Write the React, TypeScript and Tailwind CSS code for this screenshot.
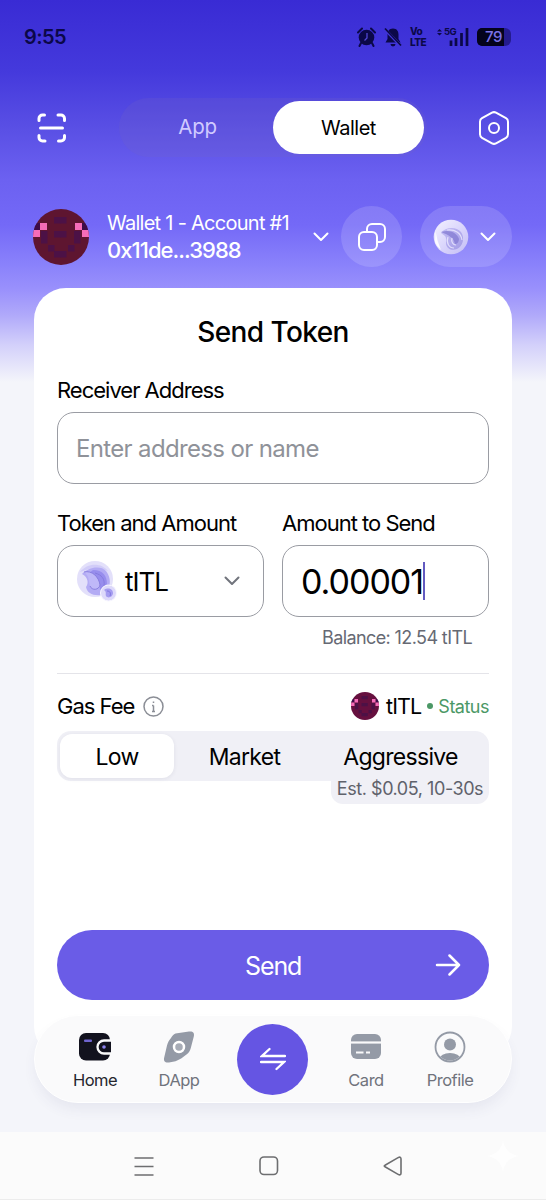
import { useState } from 'react';
import type { ReactNode } from 'react';

const AVATAR_DARK: [number, number][] = [
  [21, 8], [27, 8], [21, 22], [27, 22], [21, 42], [27, 42], [8, 22], [8, 28], [41, 22], [41, 28],
  [15, 36], [35, 36],
];

const Avatar = ({ size }: { size: number }) => (
  <svg width={size} height={size} viewBox="0 0 56 56" className="shrink-0">
    <defs>
      <clipPath id={`avatar-${size}`}>
        <circle cx="28" cy="28" r="28" />
      </clipPath>
    </defs>
    <g clipPath={`url(#avatar-${size})`}>
      <rect width="56" height="56" fill={size > 30 ? '#5e1530' : '#66103f'} />
      {AVATAR_DARK.map(([x, y]) => (
        <rect key={`${x}-${y}`} x={x} y={y} width="6.5" height="6.5" fill="#4c1146" />
      ))}
      <rect x="0" y="14" width="7" height="7" fill="#3d0c48" />
      <rect x="49" y="14" width="7" height="7" fill="#3d0c48" />
      <rect x="7" y="14" width="7" height="7" fill="#f56cb8" />
      <rect x="42" y="14" width="7" height="7" fill="#f56cb8" />
      <rect x="0" y="21" width="7" height="7" fill="#f56cb8" />
      <rect x="49" y="21" width="7" height="7" fill="#f56cb8" />
    </g>
  </svg>
);

const Coin = () => (
  <svg width="36" height="38" viewBox="0 0 36 38" className="shrink-0">
    <defs>
      <linearGradient id="coin" x1="0" y1="0" x2="1" y2="1">
        <stop offset="0" stopColor="#f4f2ff" />
        <stop offset="0.6" stopColor="#d6d1fb" />
        <stop offset="1" stopColor="#c3bdf4" />
      </linearGradient>
      <linearGradient id="swirl" x1="0" y1="0" x2="1" y2="1">
        <stop offset="0" stopColor="#b0a8f0" />
        <stop offset="1" stopColor="#8f87dc" />
      </linearGradient>
    </defs>
    <circle cx="18" cy="19" r="17.3" fill="url(#coin)" />
    <path d="M2.5 13 2 24a16 16 0 0 0 6 8q-4-9-5.5-19z" fill="#fff" opacity=".85" />
    <path d="M8 15c4-6 15-7 20-1 4 6 2 14-4 17-5 2-10 0-11-5 0-3 1-5-1-8z" fill="url(#swirl)" opacity=".65" />
    <path d="M8 14c9-3 16 1 18 7 0 3-2 5-4 5-1-6-6-9-14-12z" fill="#8078d0" opacity=".7" />
    <path
      d="M15 19c-2 6 1 11 6 11M19 20c-1 4 1 7 4 7M14 12c8-1 14 3 15 10"
      fill="none"
      stroke="#eeebff"
      strokeWidth="1.2"
      opacity=".8"
    />
  </svg>
);

const TokenIcon = () => (
  <svg width="40" height="42" viewBox="0 0 40 42" className="shrink-0">
    <circle cx="18" cy="19" r="18" fill="#e3e0fa" />
    <path d="M3 12c7-9 21-10 28-1l-9-3-10 1z" fill="#d1ccf8" />
    <path d="M5 14c6-7 19-9 24-3 7 9 4 20-5 24-8 1-14-2-15-8 3-4 2-10-4-13z" fill="#b3abf4" />
    <path d="M16 10c10 0 14 6 14 14l-7 6c0-9-4-14-11-17z" fill="#978ded" />
    <path d="M7 12c8-2 15 5 16 13-1 5-8 6-10 1-2-6 0-9-6-14z" fill="#bfb8f8" />
    <path
      d="M7 12c8-2 15 5 16 13-1 5-8 6-10 1M18 13c7 2 10 6 9 13"
      fill="none"
      stroke="#8379db"
      strokeWidth=".9"
    />
    <circle cx="31.5" cy="33" r="8" fill="#ddd9fa" stroke="#f8f7ff" strokeWidth="1" />
    <path d="M27 30c4-3 9-1 9 3s-5 6-7 3c-1-2 1-4-2-6z" fill="#a59cf0" />
    <path d="M30 31c3 0 4 2 3 5" fill="none" stroke="#7b70dc" strokeWidth=".9" />
  </svg>
);

const Chevron = ({ className }: { className: string }) => (
  <svg width="16" height="10" viewBox="0 0 16 10" fill="none" className={className}>
    <path d="m1.5 1.5 6.5 6.5 6.5-6.5" stroke="currentColor" strokeWidth="2" strokeLinecap="round" strokeLinejoin="round" />
  </svg>
);

const StatusBar = () => (
  <div className="flex h-[74px] items-center pl-6 pr-[35px] text-[#0b0848]">
    <span className="grow text-[20px] font-semibold tracking-[-0.6px]">9:55</span>
    <svg width="19" height="20" viewBox="0 0 19 20">
      <circle cx="9.5" cy="10.5" r="7.8" fill="currentColor" />
      <path d="M1 5.5 5 1.5M18 5.5l-4-4M4 16l-1.5 3M15 16l1.5 3" stroke="currentColor" strokeWidth="2" strokeLinecap="round" />
      <path d="M10 6v5l-2.5 2.5" fill="none" stroke="#5147d4" strokeWidth="1.3" />
    </svg>
    <svg width="18" height="20" viewBox="0 0 18 20" className="ml-2">
      <path d="M9 1.5c-4 0-5.5 3-5.5 6V12L1.5 15.5h15L14.5 12V7.5c0-3-1.5-6-5.5-6zM6.5 17h5a2.5 2.5 0 0 1-5 0z" fill="currentColor" />
      <path d="M1 2.5 16 18" stroke="#4236d8" strokeWidth="3" />
      <path d="m1 1.5 16 17" stroke="currentColor" strokeWidth="1.7" />
    </svg>
    <span className="ml-2 flex w-[17px] flex-col text-[10px] leading-[11px] font-extrabold tracking-[-0.5px]">
      <span>Vo</span>
      <span>LTE</span>
    </span>
    <div className="relative ml-[10px] h-[20px] w-[32px]">
      <svg width="32" height="20" viewBox="0 0 32 20">
        <path d="M0 4.5 2.5 2 5 4.5zM0 6l2.5 2.5L5 6z" fill="currentColor" />
        <path d="M14 13.5V19M19 11v8M24.5 6v13M30 1v18" stroke="currentColor" strokeWidth="2.7" />
      </svg>
      <span className="absolute left-[7px] top-0 text-[9.5px] leading-[9px] font-bold tracking-[-0.5px]">5G</span>
    </div>
    <div className="ml-2 flex h-[18px] w-[34px] items-center rounded-[6px] bg-[#241b8e]">
      <span className="flex h-full w-[27px] items-center justify-center rounded-l-[5px] bg-[#04031c] pl-1.5 text-[15px] font-medium tracking-[-0.5px] text-[#7a72e6]">
        79
      </span>
    </div>
  </div>
);

const Header = () => {
  const [tab, setTab] = useState('Wallet');
  return (
    <div className="mt-6 flex h-[59px] items-center justify-between pl-[37px] pr-9 text-white">
      <svg width="30" height="30" viewBox="0 0 30 30" fill="none" stroke="currentColor" strokeWidth="3" strokeLinecap="round">
        <path d="M2 7.5V5.5a3.500 3.500 0 0 1 3.500-3.500h2M21 2h2.500A3.500 3.500 0 0 1 27.500 5.500v2M27.500 22.500v2A3.500 3.500 0 0 1 24 28h-2.500M8 28H5.500A3.500 3.500 0 0 1 2 24.500v-2M3.500 15h22" />
      </svg>
      <div className="ml-[13px] flex h-[59px] w-[308px] items-center rounded-full bg-[#7462c4]/20 pl-px pr-[3px]">
        {['App', 'Wallet'].map((name) => (
          <button
            key={name}
            onClick={() => setTab(name)}
            className={
              tab === name
                ? 'h-[53px] w-[151px] rounded-full bg-white text-[20px] tracking-[-0.5px] text-black'
                : 'h-[53px] w-[153px] pl-0.5 text-[20.5px] tracking-[-0.3px] text-[#d0caff]'
            }
          >
            {name}
          </button>
        ))}
      </div>
      <svg width="32" height="34" viewBox="0 0 32 34" fill="none" stroke="currentColor" strokeWidth="2" className="ml-3">
        <path d="M14 1.700a4 4 0 0 1 4 0l10 5.500a4 4 0 0 1 2 3.500v12.600a4 4 0 0 1-2 3.500l-10 5.500a4 4 0 0 1-4 0L4 26.800a4 4 0 0 1-2-3.500V10.700a4 4 0 0 1 2-3.500z" />
        <circle cx="16" cy="17" r="5" />
      </svg>
    </div>
  );
};

const AccountRow = () => (
  <div className="mt-[49px] flex h-[61px] items-center pl-[33px] pr-[34px] text-white">
    <Avatar size={56} />
    <div className="ml-[18px] flex w-[206px] flex-col text-[20px] leading-[27px] whitespace-nowrap">
      <span className="tracking-[-0.73px]">Wallet 1 - Account #1</span>
      <span className="text-[22px] font-medium tracking-[-0.95px]">0x11de...3988</span>
    </div>
    <Chevron className="shrink-0" />
    <button className="ml-3 flex size-[61px] shrink-0 items-center justify-center rounded-full bg-white/14">
      <svg width="28" height="28" viewBox="0 0 28 28" fill="none" stroke="currentColor" strokeWidth="2">
        <rect x="1" y="9" width="18" height="18" rx="5" />
        <path d="M9 9V6a5 5 0 0 1 5-5h8a5 5 0 0 1 5 5v8a5 5 0 0 1-5 5h-3" />
      </svg>
    </button>
    <button className="ml-[18px] flex h-[61px] w-[92px] shrink-0 items-center rounded-full bg-white/14 pl-[13px]">
      <Coin />
      <Chevron className="ml-[11px]" />
    </button>
  </div>
);

const Label = ({ children }: { children: ReactNode }) => (
  <div className="flex h-7 items-center text-[22px] tracking-[-1px] whitespace-nowrap">{children}</div>
);

const GasFee = () => {
  const [speed, setSpeed] = useState('Low');
  return (
    <>
      <div className="mt-4 flex h-8 items-center">
        <span className="text-[22px] tracking-[-1px]">Gas Fee</span>
        <svg width="21" height="21" viewBox="0 0 21 21" fill="none" stroke="#8b8e96" strokeWidth="1.5" className="ml-[9px]">
          <circle cx="10.5" cy="10.5" r="9.5" />
          <path d="M10.5 9.5v6M9 9.5h1.5M9 15.5h3M10.5 5.5v1.500" />
        </svg>
        <div className="ml-auto flex items-center">
          <Avatar size={28} />
          <span className="ml-[7px] text-[21.5px] tracking-[-0.9px]">tITL</span>
          <span className="ml-1.5 size-1.5 rounded-full bg-[#4b9866]" />
          <span className="ml-[5px] text-[18px] tracking-[-0.5px] text-[#4b9866]">Status</span>
        </div>
      </div>
      <div className="mt-[9px] flex h-[50px] items-center rounded-[14px] rounded-br-none bg-[#f0f0f6] pl-[3px]">
        {['Low', 'Market', 'Aggressive'].map((name) => (
          <button
            key={name}
            onClick={() => setSpeed(name)}
            className={`h-11 rounded-xl pt-0.5 text-[23px] tracking-[-0.7px] ${
              name === 'Low' ? 'w-[114px]' : name === 'Market' ? 'w-[141px]' : 'w-[171px]'
            } ${speed === name ? 'bg-white shadow-[0_1px_4px_rgba(40,40,80,0.08)]' : ''}`}
          >
            {name}
          </button>
        ))}
      </div>
      <div className="ml-auto flex h-[23px] w-[158px] items-center justify-center rounded-b-[12px] bg-[#f0f0f6] pb-2 text-[18px] tracking-[-0.45px] whitespace-nowrap text-[#5f626b]">
        Est. $0.05, 10-30s
      </div>
    </>
  );
};

const SendCard = () => (
  <div className="mx-[34px] mt-[21px] h-[770px] rounded-[32px] bg-white px-[23px] pt-[26px] text-black">
    <h1 className="flex h-9 items-center justify-center text-[28px] font-medium tracking-[-0.6px]">
      Send Token
    </h1>
    <div className="mt-[26px]">
      <Label>Receiver Address</Label>
    </div>
    <div className="mt-2 flex h-[72px] items-center rounded-[17px] border-[1.5px] border-[#9a9ca3] pt-0.5 pl-[18px] text-[24px] tracking-[-0.65px] text-[#8f9299]">
      Enter address or name
    </div>
    <div className="mt-[25px] grid grid-cols-2 gap-x-[18px] gap-y-2">
      <Label>Token and Amount</Label>
      <Label>Amount to Send</Label>
      <button className="flex h-[72px] items-center rounded-[17px] border-[1.5px] border-[#9a9ca3] pl-[19px] pr-[23px]">
        <TokenIcon />
        <span className="ml-2 grow text-left text-[26px] tracking-[-1px]">tITL</span>
        <Chevron className="text-[#71747c]" />
      </button>
      <div className="flex h-[72px] items-center rounded-[17px] border-[1.5px] border-[#9a9ca3] pl-[18px]">
        <span className="text-[34px] tracking-[-1px]">0.00001</span>
        <span className="h-[38px] w-0.5 bg-[#625ac0]" />
      </div>
    </div>
    <div className="mt-[9px] pr-[17px] text-right text-[18px] leading-6 tracking-[-0.6px] text-[#666973]">
      Balance: 12.54 tITL
    </div>
    <div className="mt-[23px] h-px bg-[#e4e4e9]" />
    <GasFee />
    <button className="mt-[126px] flex h-[70px] w-full items-center rounded-full bg-[#6a5ce7] pl-[188px] pr-7 text-white">
      <span className="grow pt-[3px] text-left text-[25px] tracking-[-1.1px]">Send</span>
      <svg width="26" height="22" viewBox="0 0 26 22" fill="none" stroke="currentColor" strokeWidth="2.5" strokeLinecap="round" strokeLinejoin="round">
        <path d="M2 11h22M14.5 1.5 24 11l-9.5 9.5" />
      </svg>
    </button>
  </div>
);

const NavItem = ({ label, className, children }: { label: string; className: string; children: ReactNode }) => (
  <button className={`mt-0.5 flex flex-col items-center ${className}`}>
    <span className="flex h-8 items-center">{children}</span>
    <span className="mt-[7px] text-[16.5px] leading-5 tracking-[-0.5px]">{label}</span>
  </button>
);

const TabBar = () => (
  <div className="relative mx-[34px] -mt-[43px] flex h-[88px] items-center rounded-full border border-white bg-[#fafafb] shadow-[0_8px_14px_-2px_rgba(60,60,110,0.08)]">
    <NavItem label="Home" className="ml-[18px] w-[84px] text-[#25262e]">
      <svg width="34" height="30" viewBox="0 0 34 30">
        <rect x="1" y="1" width="31" height="27.5" rx="7" fill="#12121e" />
        <rect x="6" y="7.5" width="8" height="2.5" rx="1" fill="#6f64cf" />
        <path d="M33 8.5h-7a6.500 6.500 0 0 0 0 13h7" fill="#12121e" stroke="#fafafb" strokeWidth="2.3" />
        <circle cx="26" cy="15" r="1.8" fill="#8d83ee" />
      </svg>
    </NavItem>
    <NavItem label="DApp" className="w-[84px] text-[#70737c]">
      <svg width="32" height="32" viewBox="0 0 32 32">
        <path d="M12.5 2.5 26 .5c4-.5 5.700 1.500 4.800 5l-3 11.500c-.8 3-2 4.800-4.300 6.500-3 2.500-6.500 5-11 6.800L6 31.500c-4 .5-5.700-1.500-4.800-5L4 14.500c.7-3 2-5 4-7.500 1.300-2 2.500-3.800 4.500-4.500z" fill="#949aa6" />
        <circle cx="16" cy="16" r="5" fill="#a7acb6" stroke="#fff" strokeWidth="2.5" />
      </svg>
    </NavItem>
    <button className="ml-4 flex size-[71px] shrink-0 items-center justify-center rounded-full bg-[#6555e3]">
      <svg width="26" height="24" viewBox="0 0 26 24" fill="none" stroke="#fff" strokeWidth="2.3">
        <path d="M25 9H2l7.500-7M1 15h23l-7.500 7" strokeLinecap="round" />
      </svg>
    </button>
    <NavItem label="Card" className="ml-4 w-[84px] text-[#70737c]">
      <svg width="32" height="27" viewBox="0 0 32 27">
        <rect x="1" y="1" width="30" height="25" rx="6" fill="#949aa6" />
        <path d="M0 9.5h32" stroke="#fafafb" strokeWidth="2.2" />
        <path d="M6 19.5h7.500M16 19.500h4" stroke="#fafafb" strokeWidth="2" />
      </svg>
    </NavItem>
    <NavItem label="Profile" className="w-[84px] text-[#70737c]">
      <svg width="32" height="32" viewBox="0 0 32 32">
        <defs>
          <clipPath id="profile">
            <circle cx="16" cy="16" r="13.5" />
          </clipPath>
        </defs>
        <circle cx="16" cy="16" r="14.5" fill="#fafafb" stroke="#949aa6" strokeWidth="1.8" />
        <circle cx="16" cy="13.5" r="6" fill="#949aa6" />
        <ellipse cx="16" cy="28" rx="10.5" ry="6" fill="#949aa6" clipPath="url(#profile)" />
      </svg>
    </NavItem>
  </div>
);

const SystemNav = () => (
  <div className="mt-[29px] flex h-[68px] items-center border-b border-[#ececec] bg-[#fbfbfb] pl-[134px] text-[#6d6e70]">
    <svg width="20" height="20" viewBox="0 0 20 20" stroke="currentColor" strokeWidth="1.6">
      <path d="M.5 2h19M.5 10.5h19M.5 19h19" />
    </svg>
    <svg width="20" height="20" viewBox="0 0 20 20" fill="none" stroke="currentColor" strokeWidth="1.6" className="ml-[105px]">
      <rect x="1" y="1" width="17.5" height="17.5" rx="4" />
    </svg>
    <svg width="20" height="20" viewBox="0 0 20 20" fill="none" stroke="currentColor" strokeWidth="1.6" className="ml-[104px]">
      <path d="M2 9.2 15.5 1.4Q18 .5 18 3v14q0 2.500-2.500 1.600L2 10.800q-1.500-.8 0-1.600z" />
    </svg>
    <svg width="32" height="32" viewBox="0 0 32 32" className="mb-5 ml-[84px]">
      <path d="M16 0q2 14 16 16-14 2-16 16Q14 18 0 16 14 14 16 0z" fill="#fefefe" />
    </svg>
  </div>
);

export default function App() {
  return (
    <div className="flex h-[1200px] w-[546px] flex-col overflow-hidden bg-[#f4f5fa] bg-[linear-gradient(to_bottom,#392bd4_0px,#4439dc_70px,#5a50e5_130px,#6c61f1_180px,#7469f7_225px,#8a82fb_265px,#9a91fc_290px,#b0a9fa_315px,#d3d0fa_345px,#f4f5fa_382px)] font-[Inter,sans-serif]">
      <StatusBar />
      <Header />
      <AccountRow />
      <SendCard />
      <TabBar />
      <SystemNav />
    </div>
  );
}
